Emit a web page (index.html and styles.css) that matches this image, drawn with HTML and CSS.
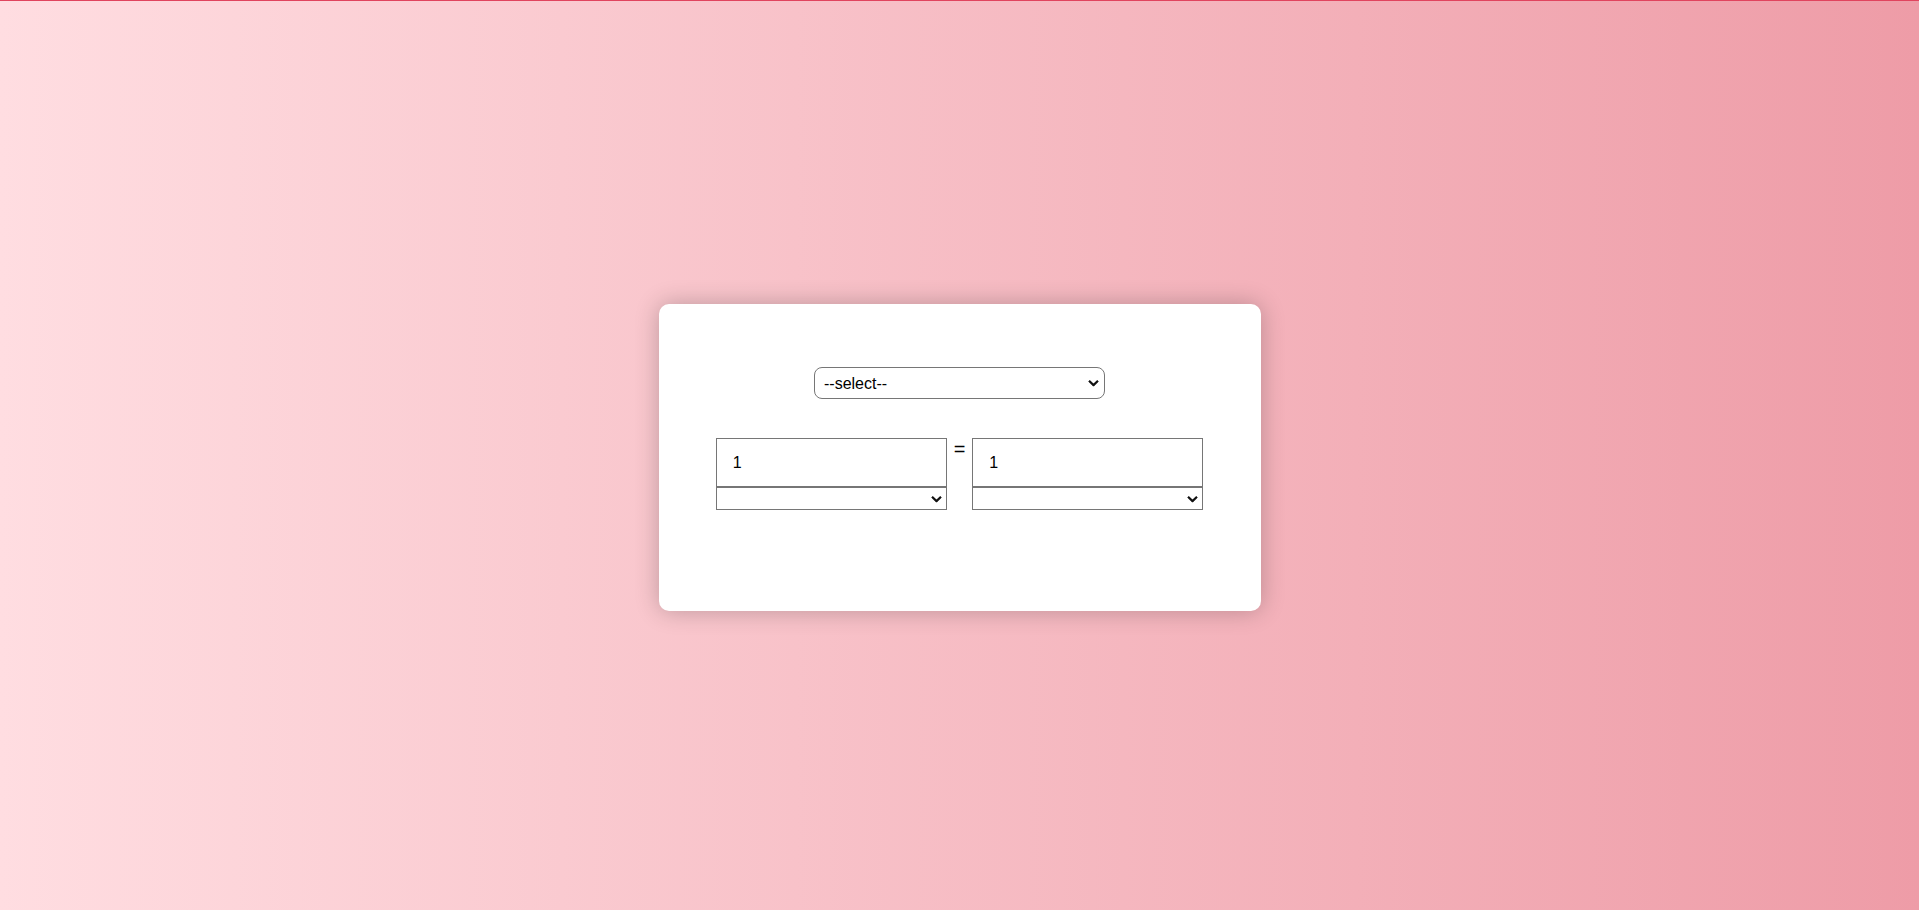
FILE: index.html
```html
<!DOCTYPE html>
<html lang="en">
<head>
<meta charset="utf-8">
<title>Unit Converter</title>
<link rel="stylesheet" href="styles.css">
</head>
<body>
<div class="page">
  <div class="card">
    <div class="select-wrap category-wrap">
      <select class="category">
        <option>--select--</option>
      </select>
      <svg class="chevron" width="11" height="7" viewBox="0 0 11 7" aria-hidden="true"><path d="M1 1.2 L5.5 5.6 L10 1.2" fill="none" stroke="#111" stroke-width="2.2"/></svg>
    </div>
    <div class="row">
      <div class="col">
        <input class="value" type="text" value="1">
        <div class="select-wrap unit-wrap">
          <select class="unit"></select>
          <svg class="chevron" width="11" height="7" viewBox="0 0 11 7" aria-hidden="true"><path d="M1 1.2 L5.5 5.6 L10 1.2" fill="none" stroke="#111" stroke-width="2.2"/></svg>
        </div>
      </div>
      <span class="eq">=</span>
      <div class="col">
        <input class="value" type="text" value="1">
        <div class="select-wrap unit-wrap">
          <select class="unit"></select>
          <svg class="chevron" width="11" height="7" viewBox="0 0 11 7" aria-hidden="true"><path d="M1 1.2 L5.5 5.6 L10 1.2" fill="none" stroke="#111" stroke-width="2.2"/></svg>
        </div>
      </div>
    </div>
  </div>
</div>
</body>
</html>
```
FILE: styles.css
```css
html, body {
  margin: 0;
  padding: 0;
}
body {
  font-family: "Liberation Sans", Arial, sans-serif;
}
.page {
  box-sizing: border-box;
  height: 100vh;
  border-top: 1px solid #e0445e;
  padding-top: 4px;
  background: linear-gradient(to right, #ffdde1, #ee9ca7);
  display: flex;
  align-items: center;
  justify-content: center;
}
.card {
  box-sizing: border-box;
  width: 602px;
  height: 307px;
  background: #fff;
  border-radius: 10px;
  box-shadow: 0 0 24px rgba(0, 0, 0, 0.24);
  display: flex;
  flex-direction: column;
  align-items: center;
  padding-top: 63px;
  gap: 39px;
}
.select-wrap {
  position: relative;
  display: flex;
}
.chevron {
  position: absolute;
  top: 50%;
  transform: translateY(-50%);
  pointer-events: none;
}
.category-wrap .chevron {
  right: 6px;
}
.unit-wrap .chevron {
  right: 5px;
}
select {
  -webkit-appearance: none;
  appearance: none;
}
.category {
  box-sizing: border-box;
  width: 291px;
  height: 32px;
  border: 1px solid #767676;
  border-radius: 8px;
  padding: 0 24px 0 9px;
  font-family: "Liberation Sans", Arial, sans-serif;
  font-size: 16px;
  color: #000;
  background: #fff;
}
.row {
  display: flex;
  align-items: flex-start;
}
.col {
  display: flex;
  flex-direction: column;
  width: 231px;
}
.value {
  box-sizing: border-box;
  width: 231px;
  height: 49px;
  border: 1px solid #767676;
  padding: 0 16px;
  font-family: "Liberation Sans", Arial, sans-serif;
  font-size: 16px;
  color: #000;
  margin: 0;
}
.unit {
  box-sizing: border-box;
  width: 231px;
  height: 23px;
  border: 1px solid #767676;
  border-radius: 0;
  margin: 0;
  background: #fff;
  font-family: "Liberation Sans", Arial, sans-serif;
  font-size: 13px;
}
.eq {
  font-size: 20px;
  padding: 0 7px;
  color: #000;
}
```
